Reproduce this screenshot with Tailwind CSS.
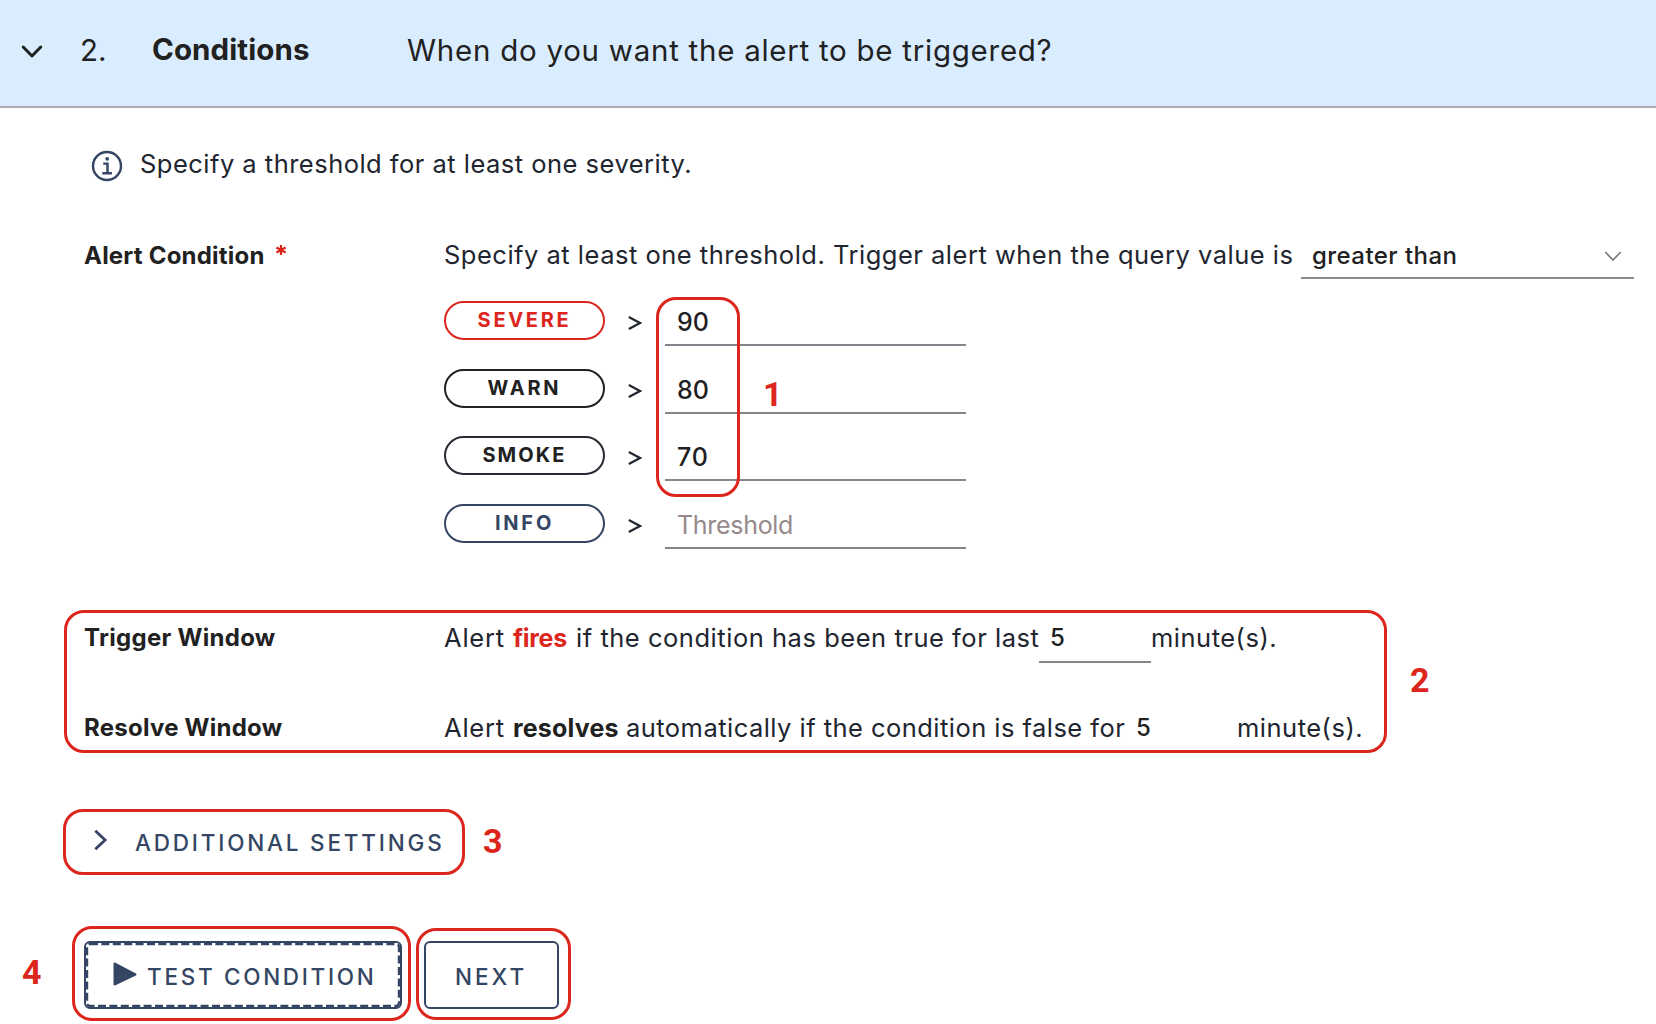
<!DOCTYPE html>
<html lang="en">
<head>
<meta charset="utf-8">
<title>Alert conditions</title>
<script src="https://cdn.jsdelivr.net/npm/@tailwindcss/browser@4"></script>
</head>
<body class="relative h-[1024px] w-[1656px] overflow-hidden bg-white font-['Inter',sans-serif] text-[25.5px] leading-[30px] tracking-[0.48px] whitespace-nowrap text-[#21252f]">
<header class="flex h-[108px] items-center border-b-2 border-[#b0aaae] bg-[#d9edff] pb-[7px] text-[29.5px] text-[#21211f]">
  <svg class="mt-1 ml-[20px] h-[20px] w-[24px]" viewBox="0 0 24 20" fill="none" stroke="#21211f" stroke-width="3" stroke-linecap="round" stroke-linejoin="round"><path d="M3.2 5l8.8 9 8.8-9"/></svg>
  <span class="ml-[36px] w-[72px] tracking-normal">2.</span>
  <h2 class="w-[255px] pb-px font-bold tracking-[0.1px]">Conditions</h2>
  <p class="tracking-[0.74px]">When do you want the alert to be triggered?</p>
</header>

<main>
  <div class="flex h-[112px] items-center pl-[91px]">
    <svg class="mt-[4px] h-[32px] w-[32px]" viewBox="0 0 32 32" fill="none" stroke="#344663" stroke-width="2.4"><circle cx="16" cy="16" r="14"/><path d="M12.2 13.6h4.3v9M11.3 23.3h9.6"/><circle cx="16.2" cy="8.8" r="1.9" fill="#344663" stroke="none"/></svg>
    <p class="ml-[17px]">Specify a threshold for at least one severity.</p>
  </div>

  <div class="flex h-[71px] items-center pl-[84px]">
    <div class="flex w-[360px] text-[24px] font-bold tracking-[0.21px] text-[#21211f]">Alert Condition
      <svg class="ml-[10px] mt-[3px] h-[12px] w-[12px]" viewBox="0 0 12 12" stroke="#dc261d" stroke-width="2.2"><path d="M6 1v10M1.4 3.5l9.2 5M10.6 3.5l-9.2 5"/></svg>
    </div>
    <p class="w-[857px] pb-px tracking-[0.5px]">Specify at least one threshold. Trigger alert when the query value is</p>
    <div class="flex h-[47px] w-[333px] items-center justify-between border-b-2 border-[#8b8b92] pt-[2px] pr-[12px] pl-[11px] text-[24px] font-medium tracking-[0.44px] text-[#21211f]">greater than
      <svg class="h-[14px] w-[18px]" viewBox="0 0 18 14" fill="none" stroke="#7b7e85" stroke-width="1.8"><path d="M1.3 3l7.7 8 7.7-8"/></svg>
    </div>
  </div>

  <div class="flex flex-col pt-[10px] pl-[444px]">
    <div class="flex h-[67.67px] items-start">
      <div class="flex h-[39px] w-[161px] items-center justify-center rounded-full border-2 border-[#dc261d] pb-px text-[20px] font-bold tracking-[2.7px] text-[#dc261d]">SEVERE</div>
      <svg class="mt-[14px] ml-[23px] h-[16px] w-[14px]" viewBox="0 0 14 16" fill="none" stroke="#21252f" stroke-width="2.2"><path d="M.8 2l11.2 6L.8 14"/></svg>
      <div class="ml-[23px] flex h-[45px] w-[301px] border-b-2 border-[#84868d] pt-[6px] pl-[12px] text-[25px] font-medium tracking-normal text-[#21211f]">90</div>
    </div>
    <div class="flex h-[67.67px] items-start">
      <div class="flex h-[39px] w-[161px] items-center justify-center rounded-full border-2 border-[#21211f] pb-px text-[20px] font-bold tracking-[2.8px] text-[#21211f]">WARN</div>
      <svg class="mt-[14px] ml-[23px] h-[16px] w-[14px]" viewBox="0 0 14 16" fill="none" stroke="#21252f" stroke-width="2.2"><path d="M.8 2l11.2 6L.8 14"/></svg>
      <div class="ml-[23px] flex h-[45px] w-[301px] border-b-2 border-[#84868d] pt-[6px] pl-[12px] text-[25px] font-medium tracking-normal text-[#21211f]">80</div>
    </div>
    <div class="flex h-[67.67px] items-start">
      <div class="flex h-[39px] w-[161px] items-center justify-center rounded-full border-2 border-[#252a33] pb-px text-[20px] font-bold tracking-[2.1px] text-[#21211f]">SMOKE</div>
      <svg class="mt-[14px] ml-[23px] h-[16px] w-[14px]" viewBox="0 0 14 16" fill="none" stroke="#21252f" stroke-width="2.2"><path d="M.8 2l11.2 6L.8 14"/></svg>
      <div class="ml-[23px] flex h-[45px] w-[301px] border-b-2 border-[#84868d] pt-[6px] pl-[12px] text-[25px] font-medium tracking-[0.8px] text-[#21211f]">70</div>
    </div>
    <div class="flex h-[67.67px] items-start">
      <div class="flex h-[39px] w-[161px] items-center justify-center rounded-full border-2 border-[#344663] pb-px text-[20px] font-bold tracking-[2.8px] text-[#344663]">INFO</div>
      <svg class="mt-[14px] ml-[23px] h-[16px] w-[14px]" viewBox="0 0 14 16" fill="none" stroke="#21252f" stroke-width="2.2"><path d="M.8 2l11.2 6L.8 14"/></svg>
      <div class="ml-[23px] flex h-[45px] w-[301px] border-b-2 border-[#84868d] pt-[6px] pl-[12px] text-[25px] tracking-[-0.3px] text-[#95898c]">Threshold</div>
    </div>
  </div>

  <div class="mt-[21px] flex h-[90px] items-center pl-[84px]">
    <h3 class="w-[360px] text-[24px] font-bold tracking-[0.29px] text-[#21211f]">Trigger Window</h3>
    <span class="w-[69px] tracking-[0.8px]">Alert</span>
    <b class="w-[63px] text-[25px] tracking-[-0.3px] text-[#dc261d]">fires</b>
    <span class="w-[463px] tracking-[0.53px]">if the condition has been true for last</span>
    <span class="flex h-[50px] w-[112px] items-center border-b-2 border-[#84868d] pt-[2px] pl-[11px] text-[24px] font-medium text-[#21211f]">5</span>
    <span class="tracking-[0.5px]">minute(s).</span>
  </div>
  <div class="flex h-[90px] items-center pl-[84px]">
    <h3 class="w-[360px] text-[24px] font-bold tracking-[0.25px] text-[#21211f]">Resolve Window</h3>
    <span class="w-[69px] tracking-[0.8px]">Alert</span>
    <b class="w-[113px] text-[25px] tracking-[0.17px] text-[#21211f]">resolves</b>
    <span class="w-[510px] tracking-[0.46px]">automatically if the condition is false for</span>
    <span class="w-[101px] text-[24px] font-medium text-[#21211f]">5</span>
    <span class="tracking-[0.5px]">minute(s).</span>
  </div>

  <div class="mt-[36px] flex h-[67px] items-center pl-[92px] text-[22.5px] font-medium tracking-[2.8px] text-[#344663]">
    <svg class="mb-[4px] h-[24px] w-[18px]" viewBox="0 0 18 24" fill="none" stroke="#344663" stroke-width="2.8"><path d="M3.3 2.8l9.8 9.2-9.8 9.2"/></svg>
    <span class="ml-[25px] pt-[2px]">ADDITIONAL SETTINGS</span>
  </div>

  <div class="mt-[65px] flex gap-[22px] pl-[84px] text-[22.5px] font-medium text-[#344663]">
    <button class="relative flex h-[68px] w-[318px] items-center rounded-[6px] border-2 border-[#344663] pt-[5px] pl-[27px] tracking-[2.7px]">
      <svg class="absolute top-0 left-0 h-[64px] w-[314px]" viewBox="0 0 314 64" fill="none"><rect x="1" y="1" width="312" height="62" rx="3" stroke="#344663" stroke-width="2.4" stroke-dasharray="8 3.4"/></svg>
      <svg class="mb-[7px] h-[24px] w-[24px]" viewBox="0 0 24 24" fill="#344663" stroke="#344663" stroke-width="2" stroke-linejoin="round"><path d="M1.5 1.5v21L22.5 12.5z"/></svg>
      <span class="ml-[10px]">TEST CONDITION</span>
    </button>
    <button class="flex h-[68px] w-[135px] items-center rounded-[6px] border-2 border-[#344663] pt-[5px] pl-[29px] tracking-[3px]">NEXT</button>
  </div>
</main>

<!-- numbered callouts over the form -->
<div class="absolute top-[297px] left-[656px] h-[200px] w-[84px] rounded-[20px] border-3 border-[#dc261d]"></div>
<div class="absolute top-[610px] left-[64px] h-[143px] w-[1323px] rounded-[20px] border-3 border-[#dc261d]"></div>
<div class="absolute top-[809px] left-[63px] h-[66px] w-[402px] rounded-[20px] border-3 border-[#dc261d]"></div>
<div class="absolute top-[926px] left-[72px] h-[95px] w-[339px] rounded-[20px] border-3 border-[#dc261d]"></div>
<div class="absolute top-[928px] left-[416px] h-[92px] w-[155px] rounded-[20px] border-3 border-[#dc261d]"></div>
<div class="font-['Roboto',sans-serif] text-[34px] leading-[40px] font-bold tracking-normal text-[#dc261d]">
  <span class="absolute top-[374px] left-[763px]">1</span>
  <span class="absolute top-[660px] left-[1410px]">2</span>
  <span class="absolute top-[821px] left-[483px]">3</span>
  <span class="absolute top-[952px] left-[22px]">4</span>
</div>
</body>
</html>
